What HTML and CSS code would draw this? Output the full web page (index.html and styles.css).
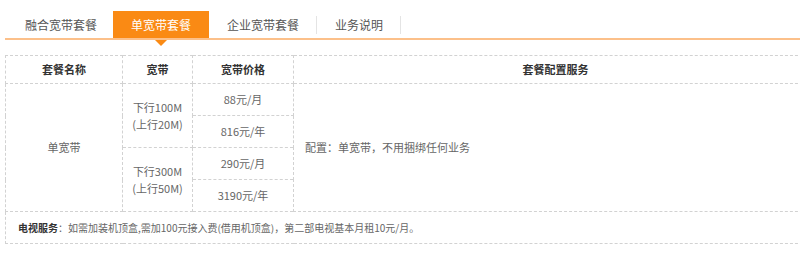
FILE: index.html
```html
<!DOCTYPE html>
<html lang="zh-CN">
<head>
<meta charset="utf-8">
<title>单宽带套餐</title>
<link rel="stylesheet" href="styles.css">
</head>
<body>
<div class="page">
  <ul class="tabs">
    <li class="tab">融合宽带套餐</li>
    <li class="tab active">单宽带套餐</li>
    <li class="tab sep">企业宽带套餐</li>
    <li class="tab sep">业务说明</li>
  </ul>
  <table class="plans">
    <colgroup>
      <col class="c1"><col class="c2"><col class="c3"><col class="c4">
    </colgroup>
    <thead>
      <tr><th>套餐名称</th><th>宽带</th><th>宽带价格</th><th>套餐配置服务</th></tr>
    </thead>
    <tbody>
      <tr>
        <td rowspan="4">单宽带</td>
        <td rowspan="2">下行100M<br>(上行20M)</td>
        <td>88元/月</td>
        <td rowspan="4" class="left">配置：单宽带，不用捆绑任何业务</td>
      </tr>
      <tr><td>816元/年</td></tr>
      <tr>
        <td rowspan="2">下行300M<br>(上行50M)</td>
        <td>290元/月</td>
      </tr>
      <tr><td>3190元/年</td></tr>
      <tr>
        <td colspan="4" class="note"><b>电视服务</b>：如需加装机顶盒,需加100元接入费(借用机顶盒)，第二部电视基本月租10元/月。</td>
      </tr>
    </tbody>
  </table>
</div>
</body>
</html>
```

FILE: styles.css
```css
html, body {
  margin: 0;
  padding: 0;
  overflow: hidden;
  background: #fff;
}
.page {
  padding: 11px 0 0 5px;
  font-family: "Noto Sans CJK SC", "Microsoft YaHei", sans-serif;
}
.tabs {
  list-style: none;
  margin: 0;
  padding: 0;
  display: flex;
  border-bottom: 2px solid #fcc08a;
  position: relative;
}
.tab {
  height: 27px;
  line-height: 27px;
  padding: 0 18px;
  font-size: 12px;
  color: #555;
  position: relative;
}
.tab:first-child {
  padding-left: 20px;
  padding-right: 16px;
}
.tab.sep::after {
  content: "";
  position: absolute;
  right: 0;
  top: 5px;
  height: 18px;
  border-right: 1px solid #e4e4e4;
}
.tab.active {
  background: #fa8a14;
  color: #fff;
}
.tab.active::after {
  content: "";
  position: absolute;
  left: 50%;
  bottom: -8px;
  margin-left: -6px;
  border-left: 6px solid transparent;
  border-right: 6px solid transparent;
  border-top: 6px solid #fa8a14;
}
.plans {
  margin-top: 15px;
  width: 812px;
  border-collapse: collapse;
  table-layout: fixed;
  font-size: 11px;
  color: #666;
}
.c1 { width: 117px; }
.c2 { width: 70px; }
.c3 { width: 101px; }
.c4 { width: 524px; }
.plans th, .plans td {
  border: 1px dashed #d2d2d2;
  text-align: center;
  padding: 0;
  line-height: 17px;
}
.plans th {
  height: 27px;
  font-weight: bold;
  color: #333;
}
.plans tbody td {
  height: 31px;
}
.plans td.left {
  text-align: left;
  padding-left: 11px;
}
.plans td.note {
  text-align: left;
  padding-left: 12px;
  font-size: 10px;
}
.note b {
  color: #333;
}
```
